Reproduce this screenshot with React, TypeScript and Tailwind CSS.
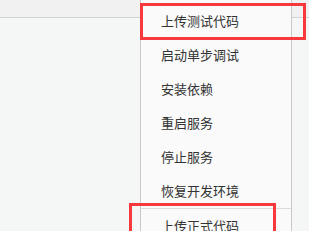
import React from "react";

const items = ["上传测试代码", "启动单步调试", "安装依赖", "重启服务", "停止服务", "恢复开发环境"];

export default function App() {
  return (
    <div
      className="relative w-[309px] h-[231px] overflow-hidden bg-[#f5f6f6]"
      style={{ fontFamily: '"Noto Sans CJK SC", "Liberation Sans", sans-serif' }}
    >
      <div className="h-[18px] bg-[#f1f1f1] border-b border-[#d4d4d4]" />
      <div className="absolute left-[140px] top-0 w-[152px] h-[240px] bg-[#fafafa] border-l border-r border-[#c9c9c9] pt-[4px]">
        {items.map((t) => (
          <div key={t} className="h-[34px] flex items-center pl-[20px] text-[13px] text-[#333333]">
            {t}
          </div>
        ))}
        <div className="h-[34px] flex items-center pl-[20px] text-[13px] text-[#333333] border-t border-[#dcdcdc]">
          上传正式代码
        </div>
      </div>
      <div className="absolute left-[140px] top-[3px] w-[166px] h-[37px] border-[3px] border-[#f7383c]" />
      <div className="absolute left-[129px] top-[203px] w-[147px] h-[40px] border-[3px] border-[#f7383c]" />
    </div>
  );
}
